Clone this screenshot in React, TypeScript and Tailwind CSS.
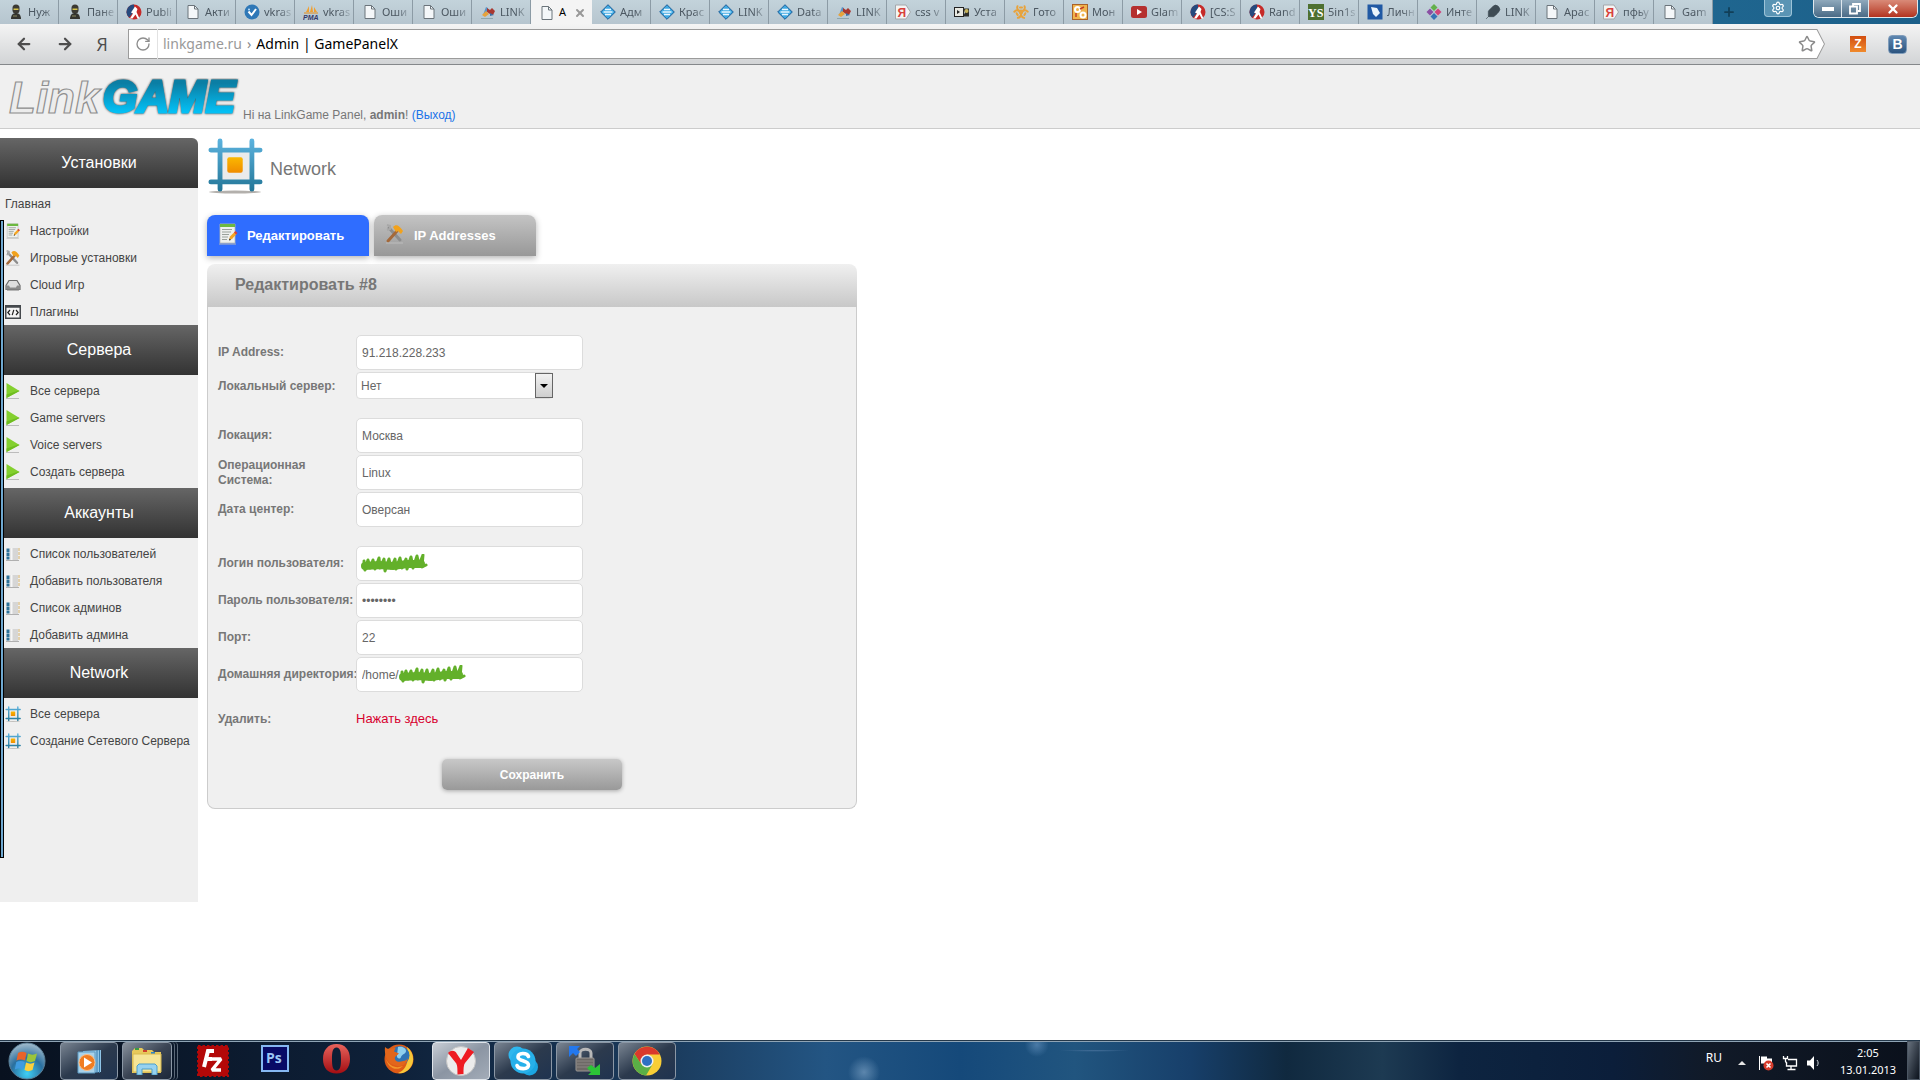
import React from 'react'
import { ArrowLeft, ArrowRight, RotateCw, Star, Settings, Plus, X, Feather, Biohazard } from 'lucide-react'

/* ---------- favicons ---------- */

const PageIcon = () => (
  <svg className="size-4" viewBox="0 0 16 16">
    <path d="M3 1.500h6.500l3.500 3.500v9.500h-10z" fill="#f4f7f9" stroke="#6b747b" />
    <path d="M9.500 1.500v3.500h3.500" fill="none" stroke="#6b747b" />
  </svg>
)

const SoldierIcon = () => (
  <svg className="size-4" viewBox="0 0 16 16">
    <path d="M4.500 4a3.500 3.500 0 0 1 7 0v3l-1 2h-5l-1-2z" fill="#3b3a34" />
    <path d="M5.500 4.500h5v1.500h-5z" fill="#d6c34a" />
    <path d="M3 15c0-4 2-6 5-6s5 2 5 6z" fill="#33342f" />
    <path d="M5 12h4" stroke="#8d8a62" />
  </svg>
)

const CsIcon = () => (
  <svg className="size-4" viewBox="0 0 16 16">
    <circle cx="8" cy="8" r="7.500" fill="#c62a28" />
    <path d="M8 .5a7.500 7.500 0 0 0-5 13l5-6z" fill="#264a7e" />
    <path d="M9 2.500l-2 3-2 3 2 1-3 5h2.500l3-4 2 4h2l-3-6.500 1-3z" fill="#fff" />
  </svg>
)

const CheckIcon = () => (
  <svg className="size-4" viewBox="0 0 16 16">
    <circle cx="8" cy="8" r="7.500" fill="#2f78b7" />
    <path d="M4.500 7.500l3 3.500 4.500-6" fill="none" stroke="#fff" strokeWidth="2" />
    <circle cx="5" cy="5.500" r="1" fill="#bfe0f8" />
  </svg>
)

const PmaIcon = () => (
  <svg className="size-4" viewBox="0 0 16 16">
    <path d="M3 8l3-6v6zM7 8l2-7 1 7zM11 8V3l3 5z" fill="#f0a030" />
    <path d="M1 9h14" stroke="#e58e1a" />
    <text x="0" y="15.500" className="font-['Liberation_Sans'] text-[7px] font-bold italic" fill="#34386a">PMA</text>
  </svg>
)

const JoomlaIcon = () => (
  <svg className="size-4" viewBox="0 0 16 16">
    <path d="M3 11l3-8 2 1-2 8z" fill="#5a95c8" />
    <path d="M7 4l3 2 2-2 3 3-2 4-3-1-3-2z" fill="#a9372f" />
    <path d="M2 11l4-4 3 3-4 3z" fill="#e8a23a" />
    <path d="M10 9l4 2-4 1z" fill="#3d6ea3" />
    <path d="M1 14.500h12" stroke="#8ea6ad" />
  </svg>
)

const DiamondIcon = () => (
  <svg className="size-4" viewBox="0 0 16 16">
    <path d="M8 .7L15.300 8 8 15.300.7 8z" fill="#3fa9e2" stroke="#1c5d97" />
    <path d="M5 5.500h6M3.500 8h9M5 10.500h6" stroke="#e8f6ff" strokeWidth="1.300" />
  </svg>
)

const YandexIcon = () => (
  <svg className="size-4" viewBox="0 0 16 16">
    <path d="M.5 1h10.500l4.500 7-4.500 7H.5z" fill="#f4f4f4" stroke="#a4a8ac" />
    <text x="2.500" y="12.500" className="font-['Liberation_Sans'] text-[12px] font-bold" fill="#d8413b">Я</text>
  </svg>
)

const CameraIcon = () => (
  <svg className="size-4" viewBox="0 0 16 16">
    <rect x=".5" y="3.500" width="9" height="9" fill="#e9e9e2" stroke="#222" />
    <path d="M9 4.500h6v8h-6l2-4z" fill="#30302b" />
    <circle cx="12.500" cy="7" r="2" fill="#c8b45a" />
    <path d="M3 6l3 2-3 2z" fill="#222" />
  </svg>
)

const GearsIcon = () => (
  <svg className="size-4" viewBox="0 0 16 16">
    <rect x=".5" y=".5" width="15" height="15" fill="#f0b44c" stroke="#a9622a" />
    <circle cx="5.500" cy="5.500" r="2.500" fill="none" stroke="#fff" strokeWidth="2" />
    <circle cx="11" cy="11" r="2.500" fill="none" stroke="#fff" strokeWidth="2" />
    <path d="M8 5l4-2M4 9v4" stroke="#c33f26" strokeWidth="1.500" />
  </svg>
)

const TubeIcon = () => (
  <svg className="size-4" viewBox="0 0 16 16">
    <rect x="0" y="2" width="16" height="12" rx="2.500" fill="#b5302f" />
    <path d="M6 5l5 3-5 3z" fill="#fff" />
  </svg>
)

const YsIcon = () => (
  <svg className="size-4" viewBox="0 0 16 16">
    <rect width="16" height="16" fill="#4e7030" />
    <text x="0" y="12.500" className="font-['Liberation_Serif'] text-[12px] font-bold" fill="#fff">YS</text>
  </svg>
)

const BlueFlagIcon = () => (
  <svg className="size-4" viewBox="0 0 16 16">
    <rect x=".5" y=".5" width="15" height="15" fill="#2059a4" />
    <path d="M4 3l6 1 3 5-4 4-3-3z" fill="#eaf4fb" />
  </svg>
)

const ColorDotsIcon = () => (
  <svg className="size-4" viewBox="0 0 16 16">
    <path d="M8 0l3.500 3.500L8 7 4.500 3.500z" fill="#63b04b" />
    <path d="M4 4.500L7.500 8 4 11.500.5 8z" fill="#8a4fa3" />
    <path d="M12 4.500L15.500 8 12 11.500 8.500 8z" fill="#d0457b" />
    <path d="M8 9l3.500 3.500L8 16l-3.500-3.500z" fill="#3672b5" />
  </svg>
)

const FeatherIcon = () => <Feather className="size-4 text-[#3f4c55]" fill="#3f4c55" strokeWidth={1} />
const BioIcon = () => <Biohazard className="size-4 text-[#e8a33c]" strokeWidth={3} />

const tabs = [
  { icon: SoldierIcon, title: 'Нуж' },
  { icon: SoldierIcon, title: 'Пане' },
  { icon: CsIcon, title: 'Publi' },
  { icon: PageIcon, title: 'Акти' },
  { icon: CheckIcon, title: 'vkras' },
  { icon: PmaIcon, title: 'vkras' },
  { icon: PageIcon, title: 'Оши' },
  { icon: PageIcon, title: 'Оши' },
  { icon: JoomlaIcon, title: 'LINK' },
  { icon: PageIcon, title: 'A', active: true },
  { icon: DiamondIcon, title: 'Адм' },
  { icon: DiamondIcon, title: 'Крас' },
  { icon: DiamondIcon, title: 'LINK' },
  { icon: DiamondIcon, title: 'Data' },
  { icon: JoomlaIcon, title: 'LINK' },
  { icon: YandexIcon, title: 'css v' },
  { icon: CameraIcon, title: 'Уста' },
  { icon: BioIcon, title: 'Гото' },
  { icon: GearsIcon, title: 'Мон' },
  { icon: TubeIcon, title: 'Glam' },
  { icon: CsIcon, title: '[CS:S' },
  { icon: CsIcon, title: 'Rand' },
  { icon: YsIcon, title: '5in1s' },
  { icon: BlueFlagIcon, title: 'Личн' },
  { icon: ColorDotsIcon, title: 'Инте' },
  { icon: FeatherIcon, title: 'LINK' },
  { icon: PageIcon, title: 'Apac' },
  { icon: YandexIcon, title: 'пфьу' },
  { icon: PageIcon, title: 'Gam' },
]

/* ---------- panel icons ---------- */

const NetworkIcon = ({ className }: { className: string }) => (
  <svg className={className} viewBox="0 0 56 58">
    <defs>
      <linearGradient id="net-bar" x1="0" y1="0" x2="0" y2="56" gradientUnits="userSpaceOnUse">
        <stop offset="0" stopColor="#5db4e0" />
        <stop offset="1" stopColor="#227596" />
      </linearGradient>
      <linearGradient id="net-core" x1="0" y1="0" x2="0" y2="1">
        <stop offset="0" stopColor="#fbb800" />
        <stop offset="1" stopColor="#f08c00" />
      </linearGradient>
    </defs>
    <ellipse cx="28" cy="56" rx="27" ry="1.500" fill="#b3b0ac" />
    <rect x="14" y="13" width="29" height="31" fill="#ebebeb" />
    <path d="M12.500 3v50M45.500 3v50M3 12.500h51M3 45.500h51" stroke="url(#net-bar)" strokeWidth="5" strokeLinecap="round" />
    <rect x="20" y="20" width="16" height="16" rx="2" fill="url(#net-core)" />
  </svg>
)

const NoteIcon = ({ className }: { className: string }) => (
  <svg className={className} viewBox="0 0 20 22">
    <path d="M2 1h15v19H2z" fill="#eef0ee" stroke="#b4b8b4" strokeWidth=".8" />
    <path d="M2 1h15v3H2z" fill="#6cb840" />
    <path d="M4 6.500h10M4 9h9M4 11.500h7M4 14h6M4 16.500h5" stroke="#9aa19a" strokeWidth="1.200" />
    <path d="M11 17l1-3.500 5-5 2 2-5 5.500z" fill="#f5a623" />
    <path d="M16 9.500l1.500-1.500 2 2-1.500 1.500z" fill="#d64040" />
    <path d="M11 17.500l.6-2 1.400 1.400z" fill="#222" />
    <path d="M1 21h17" stroke="#b7b7b7" />
  </svg>
)

const ToolsIcon = ({ className }: { className: string }) => (
  <svg className={className} viewBox="0 0 20 20">
    <path d="M4 4l11 12" stroke="#8d8d8d" strokeWidth="3" strokeLinecap="round" />
    <path d="M2 1l3 1v3l-3 1" fill="none" stroke="#a8a8a8" strokeWidth="2" />
    <path d="M3 17L12 7" stroke="#a4693a" strokeWidth="3" strokeLinecap="round" />
    <path d="M8 3c3-3 6-2 10 4l-2 3-3-3-2 1z" fill="#f2a21c" />
    <path d="M1 19h17" stroke="#bdbdbd" />
  </svg>
)

const DriveIcon = ({ className }: { className: string }) => (
  <svg className={className} viewBox="0 0 16 16">
    <path d="M4 3.500h8l3 5v4H1v-4z" fill="#dedede" stroke="#6c6c6c" strokeWidth="1.200" />
    <path d="M1 8.500h3l1 2h6l1-2h3v4H1z" fill="#8b8b8b" />
    <path d="M2 13.500h12" stroke="#b5b5b5" />
  </svg>
)

const CodeIcon = ({ className }: { className: string }) => (
  <svg className={className} viewBox="0 0 16 16">
    <rect x=".75" y="1.750" width="14.500" height="12.500" fill="#f4f4f4" stroke="#45494d" strokeWidth="1.500" />
    <path d="M0 2.500h16" stroke="#45494d" strokeWidth="2.500" />
    <path d="M5 6L2.800 8.500 5 11M11 6l2.200 2.500L11 11M8.800 5.800l-1.600 5.400" fill="none" stroke="#222" strokeWidth="1.200" />
  </svg>
)

const PlayIcon = ({ className }: { className: string }) => (
  <svg className={className} viewBox="0 0 16 16">
    <path d="M1.500 0v15l13-7z" fill="#84d02e" />
    <path d="M1.500 15l13-7-1-.6-12 4z" fill="#6fbd20" />
    <path d="M1 15.500h13" stroke="#bcbcbc" />
  </svg>
)

const UsersIcon = ({ className }: { className: string }) => (
  <svg className={className} viewBox="0 0 16 16">
    <rect x="5" y="2" width="8" height="12" fill="#d6d6d6" />
    <path d="M3 2.500v11" stroke="#2b7199" strokeWidth="3" strokeDasharray="3.500 .5" />
    <path d="M6.500 2v12" stroke="#f6f6f6" strokeWidth="2" />
    <path d="M14 2v11" stroke="#d6b26a" strokeDasharray="3 1" />
    <path d="M1 14.500h13" stroke="#b0b0b0" />
  </svg>
)

const menu = [
  {
    title: 'Установки',
    items: [
      { label: 'Главная' },
      { label: 'Настройки', icon: NoteIcon },
      { label: 'Игровые установки', icon: ToolsIcon },
      { label: 'Cloud Игр', icon: DriveIcon },
      { label: 'Плагины', icon: CodeIcon },
    ],
  },
  {
    title: 'Сервера',
    spaced: true,
    items: [
      { label: 'Все сервера', icon: PlayIcon },
      { label: 'Game servers', icon: PlayIcon },
      { label: 'Voice servers', icon: PlayIcon },
      { label: 'Создать сервера', icon: PlayIcon },
    ],
  },
  {
    title: 'Аккаунты',
    items: [
      { label: 'Список пользователей', icon: UsersIcon },
      { label: 'Добавить пользователя', icon: UsersIcon },
      { label: 'Список админов', icon: UsersIcon },
      { label: 'Добавить админа', icon: UsersIcon },
    ],
  },
  {
    title: 'Network',
    items: [
      { label: 'Все сервера', icon: NetworkIcon },
      { label: 'Создание Сетевого Сервера', icon: NetworkIcon },
    ],
  },
]

/* ---------- browser ---------- */

const TabStrip = () => (
  <div className="flex h-6 bg-gradient-to-r from-[#1f6f98] via-[#2a7ba3] to-[#1c608a] font-['Noto_Sans',sans-serif] text-[11px]">
    <div className="flex">
      {tabs.map(({ icon: Icon, title, active }, i) => (
        <button
          key={i}
          className={
            active
              ? 'flex h-[25px] w-[61px] items-center gap-1 bg-[#f4f4f4] pl-2 text-black'
              : 'flex w-[59px] items-center gap-1 border-r border-[#8c9ba5] bg-gradient-to-b from-[#c3d3db] to-[#b6c5cf] pl-2 text-[#4c5862]'
          }
        >
          <span className="shrink-0"><Icon /></span>
          {active ? (
            <>
              <span>{title}</span>
              <X className="ml-1 size-3 text-[#999]" strokeWidth={4} />
            </>
          ) : (
            <span className="flex-1 text-left whitespace-nowrap [mask-image:linear-gradient(to_right,black_50%,transparent)]">{title}</span>
          )}
        </button>
      ))}
    </div>
    <button aria-label="Новая вкладка" className="flex w-8 items-center justify-center text-[#123f58]">
      <Plus className="size-3.5" strokeWidth={3} />
    </button>
    <div className="ml-auto flex items-start gap-[21px]">
      <button aria-label="Настройки браузера" className="flex h-[17px] w-7 items-center justify-center rounded-b border border-t-0 border-[#9cc3d8] bg-[#5a94b4] text-white">
        <Settings className="size-3.5" strokeWidth={2} />
      </button>
      <div className="mr-0.5 flex h-[18px] overflow-hidden rounded-b-md border border-t-0 border-[#dfe8ee] text-white">
        <button aria-label="Свернуть" className="flex w-7 items-end justify-center border-r border-[#dfe8ee] bg-gradient-to-b from-[#8fa9bc] to-[#4a6b86] pb-1.5">
          <span className="h-1 w-3 bg-white" />
        </button>
        <button aria-label="Развернуть" className="flex w-[27px] items-center justify-center border-r border-[#dfe8ee] bg-gradient-to-b from-[#8fa9bc] to-[#4a6b86]">
          <svg className="size-3" viewBox="0 0 12 12" fill="none" stroke="#fff" strokeWidth="1.800">
            <path d="M4 3V1h7v7H9" />
            <path d="M1 3.500h7v7H1z" />
          </svg>
        </button>
        <button aria-label="Закрыть" className="flex w-12 items-center justify-center bg-gradient-to-b from-[#d98a78] to-[#b3311d]">
          <X className="size-3.5" strokeWidth={4} />
        </button>
      </div>
    </div>
  </div>
)

const Toolbar = () => (
  <div className="flex h-[41px] items-center border-b border-[#85888b] bg-gradient-to-b from-[#f4f4f4] to-[#d2d4d6] pr-[13px] text-[#4d4d4d]">
    <div className="flex w-32 items-center justify-between pr-5 pl-[15px]">
      <button aria-label="Назад"><ArrowLeft className="size-[18px]" strokeWidth={3} /></button>
      <button aria-label="Вперёд"><ArrowRight className="size-[18px]" strokeWidth={3} /></button>
      <button className="font-['Open_Sans',sans-serif] text-lg leading-5">Я</button>
    </div>
    <div className="relative flex h-[30px] min-w-0 flex-1 items-center font-['Noto_Sans',sans-serif] text-sm">
      <svg className="absolute inset-0 h-full w-full" viewBox="0 0 1696 30" preserveAspectRatio="none">
        <path d="M.5.500h1687.500l7.500 14.500-7.500 14.500H.5z" fill="#fff" stroke="#9b9b9b" />
      </svg>
      <button aria-label="Обновить" className="relative flex h-full w-[30px] items-center justify-center border-r border-[#e2e2e2] text-[#8d8d8d]">
        <RotateCw className="size-4" strokeWidth={2} />
      </button>
      <span className="relative pl-[5px] text-[#999]">linkgame.ru</span>
      <span className="relative px-[5px] text-[#888]">›</span>
      <span className="relative text-black">Admin | GamePanelX</span>
      <button aria-label="Добавить в закладки" className="relative mr-[9px] ml-auto text-[#8b8b8b]">
        <Star className="size-[18px]" strokeWidth={2} />
      </button>
    </div>
    <button className="ml-[25px] flex size-4 items-center justify-center bg-gradient-to-b from-[#d24d10] to-[#f08a2c] font-['Liberation_Sans'] text-xs font-bold text-white">Z</button>
    <button className="ml-[22px] flex size-[19px] items-center justify-center rounded-sm border border-[#7f9cba] bg-gradient-to-b from-[#5f87b0] to-[#2c5580] font-['Liberation_Sans'] text-sm font-bold text-white">B</button>
  </div>
)

/* ---------- page ---------- */

const Logo = () => (
  <svg className="h-10 w-[236px]" viewBox="0 0 236 40">
    <defs>
      <linearGradient id="logo-game" x1="0" y1="2" x2="0" y2="34" gradientUnits="userSpaceOnUse">
        <stop offset=".1" stopColor="#0b7ea4" />
        <stop offset="1" stopColor="#04c0f5" />
      </linearGradient>
    </defs>
    <text x="5" y="35" className="font-['Liberation_Sans'] text-[44px] font-bold italic" fill="#ececec" stroke="#8f8f8f" strokeWidth="1.200">Link</text>
    <text
      x="99"
      y="34"
      className="font-['Liberation_Sans'] text-[44px] font-bold italic drop-shadow-[0_0_1px_#333]"
      fill="url(#logo-game)"
      stroke="url(#logo-game)"
      strokeWidth="3"
    >
      GAME
    </text>
  </svg>
)

const Sidebar = () => (
  <aside className="relative w-[198px] shrink-0 overflow-hidden rounded-tr-md bg-[#efefef] pb-[148px]">
    {menu.map((section) => (
      <nav key={section.title}>
        <h2 className="flex h-[50px] items-center justify-center bg-gradient-to-b from-[#666] to-[#333] text-base text-white">{section.title}</h2>
        <ul className={section.spaced ? 'pt-0.5 pb-[3px]' : 'pt-0.5'}>
          {section.items.map(({ label, icon: Icon }) => (
            <li key={label} className="flex h-[27px] items-center pl-[5px]">
              {Icon && <span className="w-[25px] shrink-0"><Icon className="size-4" /></span>}
              <a href="#" className="whitespace-nowrap text-[#444]">{label}</a>
            </li>
          ))}
        </ul>
      </nav>
    ))}
    <div className="absolute top-[82px] bottom-11 left-0 w-1 border border-black bg-[#6fa8d0]" />
  </aside>
)

const Scribble = ({ className }: { className: string }) => (
  <svg className={className} viewBox="0 0 66 20">
    <path
      d="M3 7l1 9 3-10 2 8 3-8 2 9 4-11 1 10 4-9 1 12 4-12 2 9 4-9 1 10 4-11 2 10 4-9 1 10 4-12 2 11 4-12 2 9 4-10-1 12 4-2"
      fill="none"
      stroke="#63b02a"
      strokeWidth="3"
      strokeLinecap="round"
      strokeLinejoin="round"
    />
    <path d="M4 12l14-1 14 1 14-2 14 0" fill="none" stroke="#63b02a" strokeWidth="8" strokeLinecap="round" />
  </svg>
)

type FieldProps = {
  id: string
  label: string
  value: string
  type?: string
  scribble?: string
}

const Field = ({ id, label, value, type = 'text', scribble }: FieldProps) => (
  <div className="flex items-center">
    <label htmlFor={id} className="w-[138px] shrink-0 leading-[15px] font-bold">{label}</label>
    <div className="relative">
      <input
        id={id}
        type={type}
        defaultValue={value}
        className="h-[35px] w-[227px] rounded-[5px] border border-[#dcdcdc] bg-white px-[5px] text-[#666]"
      />
      {scribble && <Scribble className={scribble} />}
    </div>
  </div>
)

const EditForm = () => (
  <form className="rounded-b-lg border border-t-0 border-[#ccc] bg-[#f0f0f0] pt-7 pb-[18px] pl-2.5 text-xs text-[#777]">
    <div className="flex flex-col gap-0.5">
      <Field id="ip" label="IP Address:" value="91.218.228.233" />
      <div className="flex items-center">
        <label htmlFor="local" className="w-[138px] shrink-0 font-bold">Локальный сервер:</label>
        <div className="relative">
          <select id="local" className="h-[27px] w-[197px] appearance-none rounded-sm border border-[#dcdcdc] bg-white px-1 text-[#666]">
            <option>Нет</option>
            <option>Да</option>
          </select>
          <span className="pointer-events-none absolute top-px right-0 flex h-[25px] w-[18px] items-center justify-center border border-[#666] bg-gradient-to-b from-[#f2f2f2] to-[#cfcfcf]">
            <span className="border-x-4 border-t-4 border-x-transparent border-t-black" />
          </span>
        </div>
      </div>
    </div>
    <div className="mt-[19px] flex flex-col gap-0.5">
      <Field id="location" label="Локация:" value="Москва" />
      <Field id="os" label="Операционная Система:" value="Linux" />
      <Field id="dc" label="Дата центер:" value="Оверсан" />
    </div>
    <div className="mt-[19px] flex flex-col gap-0.5">
      <Field id="login" label="Логин пользователя:" value="" scribble="absolute top-2 left-1 h-5 w-[68px]" />
      <Field id="password" label="Пароль пользователя:" value="password" type="password" />
      <Field id="port" label="Порт:" value="22" />
      <div className="whitespace-nowrap">
        <Field id="home" label="Домашняя директория:" value="/home/" scribble="absolute top-2 left-[42px] h-5 w-[68px]" />
      </div>
    </div>
    <div className="mt-[18px] flex items-center">
      <span className="w-[138px] font-bold">Удалить:</span>
      <a href="#" className="text-[13px] text-[#d8002f]">Нажать здесь</a>
    </div>
    <button
      type="button"
      className="mt-8 ml-56 block h-[31px] w-[180px] rounded-[5px] bg-gradient-to-b from-[#c8c8c8] to-[#999] text-xs font-bold text-white shadow-[0_1px_4px_rgba(0,0,0,0.3)]"
    >
      Сохранить
    </button>
  </form>
)

const Content = () => (
  <main className="min-w-0 flex-1 pl-[9px]">
    <div className="flex h-[62px] items-center">
      <NetworkIcon className="mb-1.5 h-14 w-14" />
      <h1 className="pl-[7px] text-lg text-[#777]">Network</h1>
    </div>
    <div className="mt-[15px] flex gap-[5px] text-[13px] font-bold text-white">
      <button className="flex h-[41px] w-[162px] items-center rounded-t-lg bg-[#2f6dff] pl-[11px] shadow-[0_2px_6px_rgba(0,0,0,0.3)]">
        <NoteIcon className="mr-[9px] mb-1 h-[22px] w-5" />
        Редактировать
      </button>
      <button className="flex h-[41px] w-[162px] items-center rounded-t-lg bg-gradient-to-b from-[#c4c4c4] to-[#989898] pl-[11px] shadow-[0_2px_6px_rgba(0,0,0,0.3)]">
        <ToolsIcon className="mr-[9px] mb-1 size-5" />
        IP Addresses
      </button>
    </div>
    <section className="mt-2 max-w-[650px]">
      <h2 className="flex h-[43px] items-center rounded-t-lg bg-gradient-to-b from-[#f0f0f0] to-[#c8c8c8] pb-0.5 pl-7 text-base font-bold text-[#777]">Редактировать #8</h2>
      <EditForm />
    </section>
  </main>
)

/* ---------- taskbar ---------- */

const StartOrb = () => (
  <svg className="size-[38px]" viewBox="0 0 38 38">
    <defs>
      <radialGradient id="orb" cx=".5" cy=".85" r=".9">
        <stop offset="0" stopColor="#3fd0f5" />
        <stop offset=".5" stopColor="#2a6f9f" />
        <stop offset="1" stopColor="#b4c6d2" />
      </radialGradient>
    </defs>
    <circle cx="19" cy="19" r="18" fill="url(#orb)" stroke="#5b7f96" />
    <path d="M10 11c3-2 6-1.500 8.500 0l-1.500 7.500c-3-1.500-6-1.500-8.500 0z" fill="#e8632a" />
    <path d="M20 11.500c3 1.500 6 1.500 9 0l-2 7.500c-3 1.500-6 1.500-8.500 0z" fill="#9bc53a" />
    <path d="M8.300 20c2.500-1.500 5.500-1.500 8.500 0l-2 7.500c-2.500-1.500-5.500-1.500-8 0z" fill="#3f9be0" />
    <path d="M18 20.500c3 1.500 6 1.500 8.500 0l-2 7.500c-3 1.500-5.500 1.500-8 0z" fill="#fbd03c" />
  </svg>
)

const MediaIcon = () => (
  <svg className="size-7" viewBox="0 0 28 28">
    <path d="M8 4l18-1v22l-18 1z" fill="#8fc4e6" />
    <path d="M22 3v23M24.500 3v23" stroke="#3b7fae" />
    <path d="M3 5h17v21H3z" fill="#a9d2ea" stroke="#5e9cc4" />
    <circle cx="12" cy="15.500" r="8" fill="#f07d22" stroke="#fbc08a" />
    <path d="M9 10.500l8 5-8 5z" fill="#fff" />
  </svg>
)

const ExplorerIcon = () => (
  <svg className="h-7 w-8" viewBox="0 0 32 28">
    <path d="M1 4l3-3h7l2 2h8l2 2h7v21H1z" fill="#e8c95a" />
    <path d="M4 1h4v2H4z" fill="#3b9a45" />
    <path d="M12 3h4v2h-4z" fill="#d0402c" />
    <path d="M20 5h4v2h-4z" fill="#2b84c9" />
    <path d="M2 7h28v18H2z" fill="#f6e596" stroke="#d9b94e" />
    <path d="M6 28v-9l2-2h16l2 2v9h-5v-6H11v6z" fill="#96d2f0" stroke="#4c9fcb" />
  </svg>
)

const FilezillaIcon = () => (
  <svg className="size-8" viewBox="0 0 32 32">
    <rect x="1" y="1" width="30" height="30" fill="#b30808" stroke="#b30808" strokeWidth="2" strokeDasharray="2.500 2" />
    <path d="M17 6H11L7 22M9 14h6" fill="none" stroke="#fff" strokeWidth="4" />
    <path d="M15 14h9l-9 11h9" fill="none" stroke="#fff" strokeWidth="3.500" strokeLinejoin="bevel" />
  </svg>
)

const PhotoshopIcon = () => (
  <svg className="h-[27px] w-7" viewBox="0 0 28 27">
    <rect x="1" y="1" width="26" height="25" fill="#080a66" stroke="#86b8f2" strokeWidth="2" />
    <text x="5" y="18" className="font-['Open_Sans'] text-[14px] font-bold" fill="#9cc6f5">Ps</text>
  </svg>
)

const OperaIcon = () => (
  <svg className="h-[30px] w-[27px]" viewBox="0 0 27 30">
    <defs>
      <linearGradient id="opera" x1="0" y1="0" x2="0" y2="1">
        <stop offset="0" stopColor="#e8635c" />
        <stop offset="1" stopColor="#a30d12" />
      </linearGradient>
    </defs>
    <path d="M13.500 0C5 0 0 6 0 15s5 14.500 13.500 14.500S27 24 27 15 22 0 13.500 0zm0 3.500c4 0 4.500 5 4.500 11.500s-.5 11.500-4.500 11.500S9 21.500 9 15s.5-11.500 4.500-11.500z" fill="url(#opera)" />
  </svg>
)

const FirefoxIcon = () => (
  <svg className="size-[30px]" viewBox="0 0 30 30">
    <circle cx="15" cy="15" r="14.500" fill="#de5b16" />
    <path d="M23 3c7 5 8 15 3 21-3 4-8 6-12 5 8-3 12-12 9-26z" fill="#f7c839" />
    <circle cx="16" cy="11.500" r="9.500" fill="#2f74b5" />
    <path d="M14 3c4-1 8 1 8 4s-4 3-5 6-5 1-4-2z" fill="#8fd0ee" />
    <path d="M1 3c2 2 4 2 6 1.500L11.500 4 10 7.500l5 2-4 3.500c-1 4 3 6 8 4 2 0 4-1 5-3-1 7-8 10-14 7C3 20 0 10 1 3z" fill="#e2661b" />
    <path d="M2 15c3 7 10 10 17 7-6 6-15 2-17-7z" fill="#f2952a" />
  </svg>
)

const YandexBrowserIcon = () => (
  <svg className="size-[30px]" viewBox="0 0 30 30">
    <circle cx="15" cy="15" r="14.500" fill="#ececec" stroke="#c4c4c4" />
    <path d="M2 7c3-3 7-3 9 1l4 6 7-12 6 4-9 11c-1.500 2-1.500 6-1.500 11l-6 .5c0-6 0-10-2-12z" fill="#ee1b22" />
  </svg>
)

const SkypeIcon = () => (
  <svg className="size-[30px]" viewBox="0 0 30 30">
    <circle cx="9" cy="9" r="8.500" fill="#2fb7ee" />
    <circle cx="21.500" cy="21" r="8.500" fill="#1ba5e2" />
    <circle cx="15" cy="15" r="12.500" fill="#27b0ea" />
    <path d="M20.500 10.500C19 6.500 10 6.500 10 11s10.500 3 10.500 8-10 4.500-11.500.5" fill="none" stroke="#fff" strokeWidth="3.600" strokeLinecap="round" />
  </svg>
)

const LockIcon = () => (
  <svg className="h-[31px] w-[34px]" viewBox="0 0 34 31">
    <path d="M12 13V8c0-5 11-5 11 0v5" fill="none" stroke="#b8b8b8" strokeWidth="3" />
    <rect x="8" y="13" width="18" height="13" rx="1" fill="#6d6966" stroke="#9b9793" />
    <path d="M9 16h16M9 19h16M9 22h16" stroke="#8b8683" />
    <path d="M1 1h11L9 4l3 3-4 4-3-3-4 4z" fill="#2378ee" />
    <path d="M32 19v11H20l3-3-4-4 4-3 4 3z" fill="#2cc537" />
  </svg>
)

const ChromeIcon = () => (
  <svg className="size-[30px]" viewBox="0 0 30 30">
    <circle cx="15" cy="15" r="14.500" fill="#f9ce36" />
    <path d="M2.500 8A14.500 14.500 0 0 1 27.800 8.500H15L9 18z" fill="#d93a2c" />
    <path d="M2.500 8A14.500 14.500 0 0 0 14 29.500l6.500-11H9.500z" fill="#5aaf46" />
    <circle cx="15" cy="15" r="6.500" fill="#f0f0f0" />
    <circle cx="15" cy="15" r="5" fill="#2f70c2" />
  </svg>
)

const taskButton = 'flex h-[38px] w-[58px] items-center justify-center rounded-sm border border-[#8b97a5] bg-gradient-to-br from-[#7a8592] via-[#2c3a4d] to-[#1f3350]'

const Taskbar = () => (
  <footer className="mt-auto flex h-10 items-center border-t border-[#24384a] bg-[radial-gradient(circle_at_45%_80%,#5c86ad_0,transparent_16px),radial-gradient(circle_at_54%_10%,#4a7aa6_0,transparent_12px),radial-gradient(ellipse_at_57%_25%,#47719b_0,transparent_36px),linear-gradient(90deg,#08111f_0%,#0e2038_20%,#1b3c5e_35%,#235583_43%,#15497a_50%,#21557f_56%,#173f6a_62%,#10293f_67%,#1d3a52_72%,#0d2440_76%,#0b1e3a_84%,#111a28_89%,#0a101b_100%)] shadow-[inset_0_1px_0_#8fa4b5]">
    <button aria-label="Пуск" className="ml-2"><StartOrb /></button>
    <button aria-label="Проигрыватель" className={`ml-3.5 ${taskButton}`}><MediaIcon /></button>
    <div className="ml-1 flex rounded-r-sm border-r border-[#5b6878] pr-0.5">
      <div className="flex rounded-r-sm border-r border-[#5b6878] pr-0.5">
        <button aria-label="Проводник" className="flex h-[38px] w-[50px] items-center justify-center rounded-sm border border-[#8b97a5] bg-gradient-to-br from-[#8a939e] via-[#3a4454] to-[#1c2839]"><ExplorerIcon /></button>
      </div>
    </div>
    <button aria-label="FileZilla" className="ml-[19px]"><FilezillaIcon /></button>
    <button aria-label="Photoshop" className="mb-1 ml-8"><PhotoshopIcon /></button>
    <button aria-label="Opera" className="mb-1 ml-[34px]"><OperaIcon /></button>
    <button aria-label="Firefox" className="mb-1 ml-[34px]"><FirefoxIcon /></button>
    <div className="ml-[18px] flex gap-1">
      <button aria-label="Яндекс" className="flex h-[38px] w-[58px] items-center justify-center rounded-sm border border-[#dfe4ea] bg-gradient-to-br from-[#c9ced5] via-[#8b95a3] to-[#a3acb8]"><YandexBrowserIcon /></button>
      <button aria-label="Skype" className={taskButton}><SkypeIcon /></button>
      <button aria-label="PuTTY" className={taskButton}><LockIcon /></button>
      <button aria-label="Chrome" className={taskButton}><ChromeIcon /></button>
    </div>
    <div className="ml-auto flex h-full items-center text-white">
      <span className="mb-1.5 font-['Noto_Sans',sans-serif] text-xs">RU</span>
      <span className="mt-1 ml-4 border-x-4 border-b-4 border-x-transparent border-b-[#e6e6e6]" />
      <svg className="mt-1 ml-3 size-4" viewBox="0 0 16 16">
        <path d="M1.500 1v14" stroke="#fff" />
        <path d="M3 1.500h6v2h5v5H3z" fill="#fff" />
        <circle cx="10.500" cy="10.500" r="5" fill="#d63c2c" />
        <path d="M8.500 8.500l4 4M12.500 8.500l-4 4" stroke="#fff" strokeWidth="1.600" />
      </svg>
      <svg className="mt-1 ml-2 size-4" viewBox="0 0 16 16" fill="none" stroke="#fff" strokeWidth="1.300">
        <path d="M6 4.500h8.500v6.500h-10V8M9 11v3M5.500 14.500h8" />
        <path d="M1.500 1v2.500h4V1M3.500 3.500v3l1.500 2" />
      </svg>
      <svg className="mt-1 ml-2 size-4" viewBox="0 0 16 16">
        <path d="M1 5.500h3L8 1v14l-4-4.500H1z" fill="#fff" />
        <path d="M11 5c1.500 2 1.500 4 0 6" fill="none" stroke="#cfd6dd" />
      </svg>
      <div className="ml-3 w-[68px] text-center font-['Noto_Sans',sans-serif] text-[11px] leading-[17px]">
        <div>2:05</div>
        <div>13.01.2013</div>
      </div>
      <button aria-label="Свернуть все окна" className="ml-[5px] h-full w-[13px] border border-[#4b5663] bg-gradient-to-br from-[#68727e] to-[#0c131d]" />
    </div>
  </footer>
)

const App = () => {
  return (
    <div className="flex min-h-screen flex-col bg-white font-['Liberation_Sans',Arial,sans-serif] text-xs">
      <TabStrip />
      <Toolbar />
      <header className="flex h-16 items-end border-b border-[#ccc] bg-[#f0f0f0] pl-1 text-[#777]">
        <a href="#" aria-label="LinkGame" className="mb-2.5"><Logo /></a>
        <p className="mb-[5px] pl-[3px]">
          Hi на LinkGame Panel, <b>admin</b>! <a href="#" className="text-[#1a73e8]">(Выход)</a>
        </p>
      </header>
      <div className="flex items-start pt-[9px]">
        <Sidebar />
        <Content />
      </div>
      <Taskbar />
    </div>
  )
}

export default App
